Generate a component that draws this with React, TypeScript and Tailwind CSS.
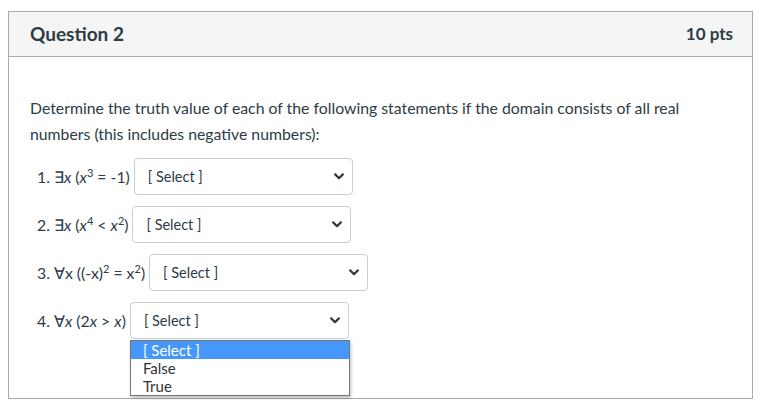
import React from "react";

function Chevron() {
  return (
    <svg width="10" height="7" viewBox="0 0 10 7" className="shrink-0">
      <path d="M1.2 1.4 L5 5.2 L8.8 1.4" fill="none" stroke="#2d3b45" strokeWidth="2.2" strokeLinecap="round" strokeLinejoin="round" />
    </svg>
  );
}

function Select({ ml }: { ml: string }) {
  return (
    <div className={`${ml} w-[219px] h-[37px] border border-[#c7cdd1] rounded-[4px] bg-white flex items-center justify-between pl-[13px] pr-[8px] shrink-0`}>
      <span className="text-[14.5px] text-[#2d3b45]">[ Select ]</span>
      <Chevron />
    </div>
  );
}

const I = ({ children }: { children: React.ReactNode }) => <span className="italic">{children}</span>;
const Sup = ({ children }: { children: React.ReactNode }) => <sup className="text-[11px]">{children}</sup>;

export default function App() {
  return (
    <div className="w-[761px] h-[409px] bg-white pt-[11px] pl-[8px]" style={{ fontFamily: "Lato, 'Noto Sans', sans-serif" }}>
      <div className="w-[745px] h-[388px] border border-[#aaaaaa] text-[#2d3b45]">
        <div className="h-[45px] bg-[#f5f5f5] border-b border-[#aaaaaa] flex items-center justify-between pl-[21px] pr-[19px]">
          <span className="text-[19px] font-bold text-[#2d3b45]">Question 2</span>
          <span className="text-[17px] font-bold text-[#2d3b45]">10 pts</span>
        </div>
        <div className="pl-[21px] pt-[38px]">
          <p className="text-[15.8px] leading-[26px] w-[680px]">
            Determine the truth value of each of the following statements if the domain consists of all real numbers (this includes negative numbers):
          </p>
          <div className="mt-[11px] pl-[7px] flex flex-col gap-[11px] text-[15.8px]">
            <div className="flex items-center h-[37px]">
              <span>1. ∃<I>x</I> (<I>x</I><Sup>3</Sup> = -1)</span>
              <Select ml="ml-[4px]" />
            </div>
            <div className="flex items-center h-[37px]">
              <span>2. ∃<I>x</I> (<I>x</I><Sup>4</Sup> &lt; <I>x</I><Sup>2</Sup>)</span>
              <Select ml="ml-[4px]" />
            </div>
            <div className="flex items-center h-[37px]">
              <span>3. ∀x ((-x)<Sup>2</Sup> = x<Sup>2</Sup>)</span>
              <Select ml="ml-[4px]" />
            </div>
            <div className="flex items-start h-[37px]">
              <div className="h-[37px] flex items-center">
                <span>4. ∀<I>x</I> (2<I>x</I> &gt; <I>x</I>)</span>
              </div>
              <div className="relative ml-[4px]">
                <Select ml="" />
                <div className="absolute left-0 top-[38px] w-[220px] border border-[#767676] bg-white shadow-[1px_2px_3px_rgba(0,0,0,0.25)] text-[15px] leading-[18px] text-[#333]">
                  <div className="bg-[#4597fb] text-white pl-[12px]">[ Select ]</div>
                  <div className="pl-[12px]">False</div>
                  <div className="pl-[12px]">True</div>
                </div>
              </div>
            </div>
          </div>
        </div>
      </div>
    </div>
  );
}
